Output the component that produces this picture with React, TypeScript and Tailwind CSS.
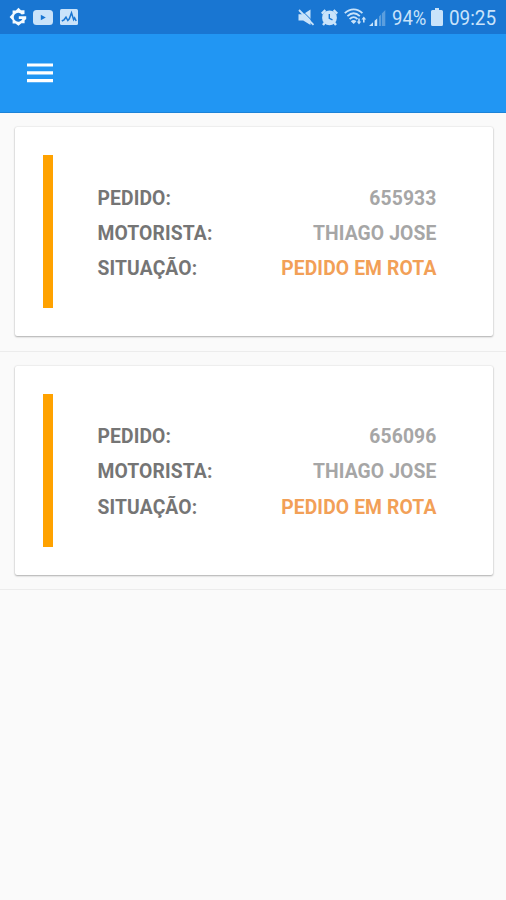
type Order = {
    id: number;
    driver: string;
    status: string;
};

const orders: Order[] = [
    { id: 655933, driver: "THIAGO JOSE", status: "PEDIDO EM ROTA" },
    { id: 656096, driver: "THIAGO JOSE", status: "PEDIDO EM ROTA" },
];

const StatusBar = () => {
    return (
        <div className="flex h-[34px] items-center justify-between bg-[#1976d2] pr-[10px] pl-[9px] text-[#c9e3fa]">
            <div className="flex items-center">
                <svg className="h-[20px] w-[19px]" viewBox="0 0 19 20" fill="none">
                    <path d="M9.5 .8L12 3.2H15.5V7L12.7 7.4A4.5 4.5 0 1 0 13.4 12H9.8V9.3H17.2V12L15.6 13.4V16.2H12.4L9.5 18.8L6.4 16.4H3.6V13.2L.6 10L3.6 6.8V3.4H6.8Z" fill="#f3faff" />
                </svg>
                <svg className="ml-[5px] h-[15px] w-[20px]" viewBox="0 0 20 15">
                    <rect width="20" height="15" rx="3.5" fill="#c9e3fa" />
                    <path d="M7.8 4.7L12.8 7.5L7.8 10.3Z" fill="#1976d2" />
                </svg>
                <svg className="ml-[7px] h-[16px] w-[18px]" viewBox="0 0 18 16" fill="none">
                    <rect width="18" height="16" rx="1.5" fill="#c9e3fa" />
                    <path d="M1.8 12L4 10.8L6 8.2L7.8 11.5L9.3 9.8L11.5 3.8L13.6 10.6L14.6 8.8L16.2 12" stroke="#1976d2" strokeWidth="1.5" />
                </svg>
            </div>
            <div className="flex items-center">
                <svg className="h-[17px] w-[17px]" viewBox="0 0 17 17" fill="none">
                    <path d="M.5 5.3H5.2L12.5 .6V16L5.2 11.5H.5Z" fill="#c9e3fa" />
                    <path d="M2.2 -.2L17 14.6" stroke="#1976d2" strokeWidth="1" />
                    <path d="M1 1L15.5 15.8" stroke="#c9e3fa" strokeWidth="1.8" />
                </svg>
                <svg className="ml-[6px] h-[17px] w-[17px]" viewBox="0 0 17 17" fill="none">
                    <path d="M.8 4.6L4.4 1.2M12.6 1.2L16.2 4.6M4 13.5L2 16M13 13.5L15 16" stroke="#c9e3fa" strokeWidth="2.4" />
                    <circle cx="8.5" cy="8.8" r="7.4" fill="#c9e3fa" />
                    <path d="M8.3 5V9.4L11.5 10.8" stroke="#1976d2" strokeWidth="1.4" />
                </svg>
                <svg className="ml-[6px] h-[18px] w-[23px]" viewBox="0 0 23 18" fill="none">
                    <path d="M.8 5.2C6.2 .2 13.2 .2 18.4 5.2M3.4 8.2C7.5 4.4 11.8 4.4 15.8 8.2M5.6 11.1C8.2 8.6 11 8.6 13.5 11.1" stroke="#c9e3fa" strokeWidth="1.8" />
                    <path d="M6.8 13.2Q9.7 10.8 12.4 13.2L9.7 16Z" fill="#c9e3fa" />
                    <path d="M14.2 10.5H15.8V13.5H17.2L15 16.5L12.8 13.5H14.2ZM19.8 8.5L22.2 11.5H20.6V14.5H19V11.5H17.4Z" fill="#c9e3fa" />
                </svg>
                <svg className="ml-[2px] h-[17px] w-[17px]" viewBox="0 0 17 17">
                    <path d="M0 17L4 13.2V17ZM5.6 11.8L8.2 9.5V17H5.6Z" fill="#c9e3fa" />
                    <path d="M10 7.5L12 5.5V17H10ZM12.8 4.5L16.3 1V17H12.8Z" fill="#5b9ede" />
                </svg>
                <div className="ml-[6px] flex w-[35px] justify-start">
                    <span className="origin-left translate-y-[0.5px] scale-x-[0.88] text-[21px] leading-none">94%</span>
                </div>
                <svg className="ml-[4px] h-[18px] w-[12px]" viewBox="0 0 12 18">
                    <path d="M4 0H8V2H10.5Q12 2 12 3.5V16.5Q12 18 10.5 18H1.5Q0 18 0 16.5V3.5Q0 2 1.5 2H4Z" fill="#c9e3fa" />
                </svg>
                <div className="ml-[6px] flex w-[47px] justify-start">
                    <span className="origin-left translate-y-[0.5px] scale-x-[0.9] text-[21px] leading-none">09:25</span>
                </div>
            </div>
        </div>
    );
};

const OrderCard = ({ order }: { order: Order }) => {
    return (
        <div className="h-[238.5px] border-b border-[#ececec] pt-[14px] pr-[13px] pl-[14.5px]">
            <div className="flex h-[209px] rounded-[2px] bg-white py-[28px] pl-[28px] shadow-[0_1px_2px_rgba(0,0,0,0.28),0_0_2px_rgba(0,0,0,0.14)]">
                <div className="h-[153px] w-[10px] bg-[#ffa200]"></div>
                <div className="ml-[45px] w-[339px] pt-[25.5px] text-[19.3px] leading-[35.25px] font-bold tracking-[0.13px]">
                    <div className="flex justify-between">
                        <span className="text-[#757575]">PEDIDO:</span>
                        <span className="text-[#a6a6a6]">{order.id}</span>
                    </div>
                    <div className="flex justify-between">
                        <span className="text-[#757575]">MOTORISTA:</span>
                        <span className="text-[#a6a6a6]">{order.driver}</span>
                    </div>
                    <div className="flex justify-between">
                        <span className="text-[#757575]">SITUAÇÃO:</span>
                        <span className="text-[#f2a057]">{order.status}</span>
                    </div>
                </div>
            </div>
        </div>
    );
};

const App = () => {
    return (
        <div className="h-screen overflow-hidden bg-[#fafafa] font-['Roboto',sans-serif]">
            <StatusBar />
            <header className="flex h-[79px] items-center border-b border-[#1c83d8] bg-[#2196f3] pl-[27px]">
                <button aria-label="Menu">
                    <svg className="h-[20px] w-[26px]" viewBox="0 0 26 20">
                        <path d="M0 .4H26V3.6H0ZM0 8.2H26V11.4H0ZM0 16H26V19.2H0Z" fill="#fff" />
                    </svg>
                </button>
            </header>
            <main>
                {orders.map((order) => (
                    <OrderCard key={order.id} order={order} />
                ))}
            </main>
        </div>
    );
};

export default App;
